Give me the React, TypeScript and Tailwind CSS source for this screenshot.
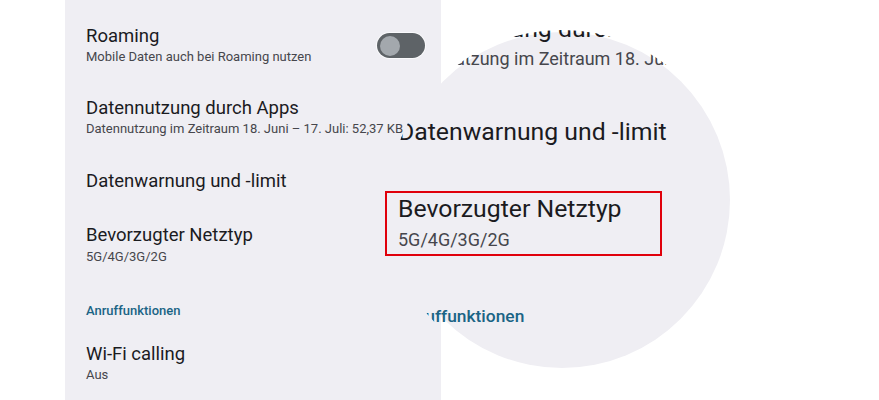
import React from 'react';

const Title = ({ children }: { children: React.ReactNode }) => (
    <div className="text-[18.5px] leading-[22px] text-[#1b1b1f] whitespace-nowrap">{children}</div>
);

const Sub = ({ children }: { children: React.ReactNode }) => (
    <div className="mt-[1px] text-[13px] leading-[18px] text-[#46464c] whitespace-nowrap">{children}</div>
);

export default function App() {
    return (
        <div className="relative w-[879px] h-[400px] bg-white overflow-hidden font-['Roboto',sans-serif]">
            {/* settings panel */}
            <div className="ml-[65px] w-[376px] h-full bg-[#efeef3] pl-[21px] pr-[16px] pt-[9.5px] flex flex-col">
                <div className="py-[15.5px] flex items-center justify-between">
                    <div>
                        <Title>Roaming</Title>
                        <Sub>Mobile Daten auch bei Roaming nutzen</Sub>
                    </div>
                    <div className="w-[48px] h-[25px] rounded-full bg-[#5e6367] ring-1 ring-white/70 flex items-center pl-[2.5px]">
                        <div className="w-[20px] h-[20px] rounded-full bg-[#a3a8ad]" />
                    </div>
                </div>
                <div className="py-[15.5px]">
                    <Title>Datennutzung durch Apps</Title>
                    <Sub>Datennutzung im Zeitraum 18. Juni – 17. Juli: 52,37 KB</Sub>
                </div>
                <div className="py-[16.5px]">
                    <Title>Datenwarnung und -limit</Title>
                </div>
                <div className="py-[15.5px]">
                    <Title>Bevorzugter Netztyp</Title>
                    <div className="mt-[2px] text-[13px] leading-[18px] text-[#46464c] whitespace-nowrap">5G/4G/3G/2G</div>
                </div>
                <div className="pt-[21.5px] text-[13px] leading-[16px] font-medium text-[#1a6485]">Anruffunktionen</div>
                <div className="py-[15.5px] pt-[24px]">
                    <Title>Wi-Fi calling</Title>
                    <Sub>Aus</Sub>
                </div>
            </div>

            {/* magnifier */}
            <div className="absolute left-[394px] top-[32px] w-[336px] h-[336px] rounded-full bg-[#efeef3]" />
            <div className="absolute left-[388px] top-[30px] w-[348px] h-[348px] rounded-full overflow-hidden">
                <div className="absolute left-[10px] top-[-16.4px] text-[24.8px] leading-[30px] text-[#1b1b1f] whitespace-nowrap">Datennutzung durch Apps</div>
                <div className="absolute left-[10px] top-[16.9px] text-[18px] leading-[24px] text-[#46464c] whitespace-nowrap">Datennutzung im Zeitraum 18. Juni – 17. Juli: 52,37 KB</div>
                <div className="absolute left-[10px] top-[86.6px] text-[24.8px] leading-[30px] text-[#1b1b1f] whitespace-nowrap">Datenwarnung und -limit</div>
                <div className="absolute left-[10px] top-[163.6px] text-[24.8px] leading-[30px] text-[#1b1b1f] whitespace-nowrap">Bevorzugter Netztyp</div>
                <div className="absolute left-[10px] top-[197.9px] text-[18px] leading-[24px] text-[#46464c] whitespace-nowrap">5G/4G/3G/2G</div>
                <div className="absolute left-[10px] top-[275.2px] text-[17.4px] leading-[22px] font-medium text-[#1a6485] whitespace-nowrap">Anruffunktionen</div>
            </div>

            {/* highlight */}
            <div className="absolute left-[385px] top-[191px] w-[277px] h-[65px] border-2 border-[#e0000b]" />
        </div>
    );
}
